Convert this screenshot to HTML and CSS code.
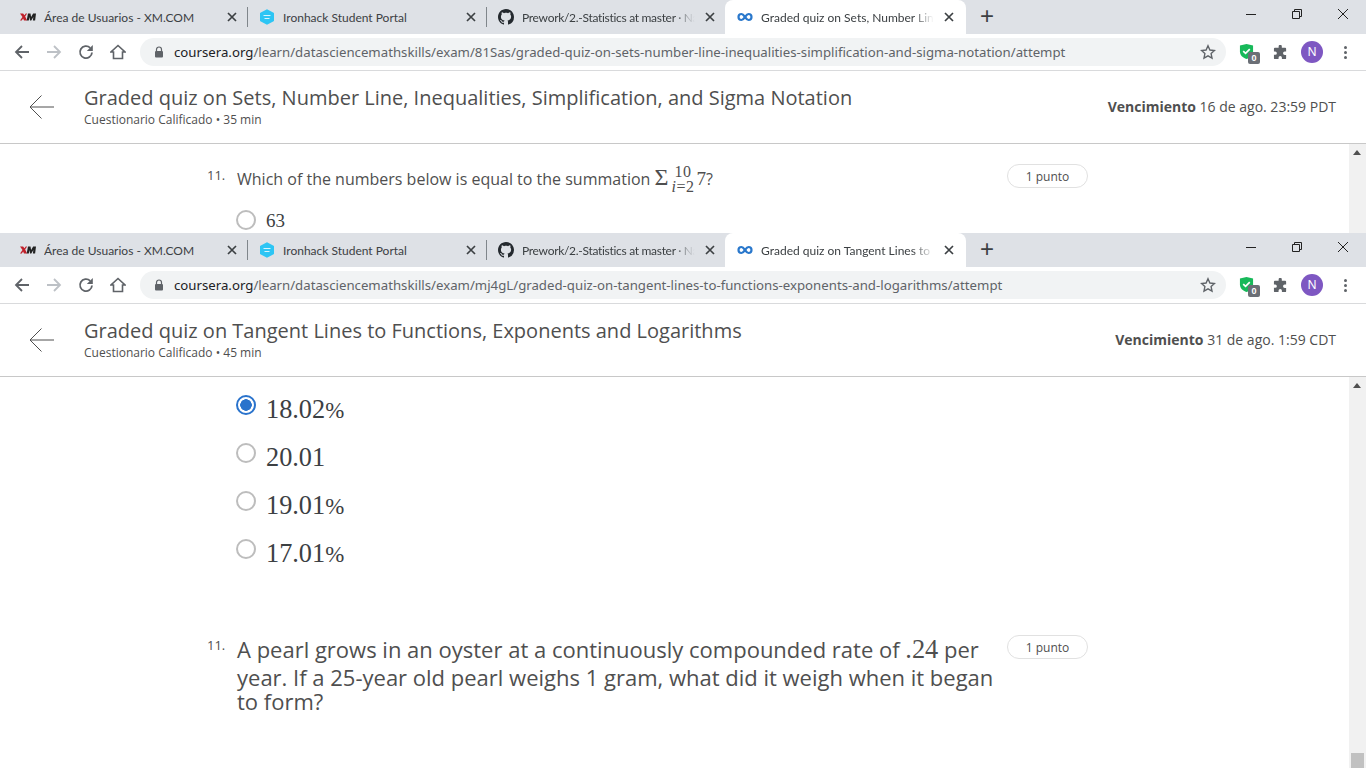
FILE: index.html
```html
<!DOCTYPE html>
<html lang="en">
<head>
    <meta charset="UTF-8">
    <title>Graded quiz</title>
    <link rel="stylesheet" href="styles.css">
</head>
<body>
<svg class="defs" width="0" height="0">
    <symbol id="i-xm" viewBox="0 0 18 10"><path d="M0 1h3.500l1.500 2 1.500-2h1.500L5.800 4.500 8 9H4.500L3.500 6.800 2 9H0l2.800-4z" fill="#c0202a"/><path d="M7.500 9l1.500-8h2.800l.7 4 2.300-4H18l-1 8h-2.500l.5-4-2.300 4h-1.400l-.7-4-.7 4z" fill="#222"/></symbol>
    <symbol id="i-iron" viewBox="0 0 16 16"><path d="M8 .3l6.600 3.500a.8.8 0 01.4.7v7a.8.8 0 01-.4.7L8 15.700 1.400 12.200a.8.8 0 01-.4-.7v-7a.8.8 0 01.4-.7z" fill="#2dc5f4"/><path d="M4.500 6.500h7M5.500 9.500h5" stroke="#d8f4fd" stroke-width="1.100"/></symbol>
    <symbol id="i-gh" viewBox="0 0 16 16"><path fill="#24292e" d="M8 0C3.580 0 0 3.580 0 8c0 3.540 2.290 6.530 5.470 7.590.4.070.55-.17.55-.38 0-.19-.01-.82-.01-1.490-2.010.37-2.530-.49-2.690-.94-.09-.23-.48-.94-.82-1.130-.28-.15-.68-.52-.01-.53.630-.01 1.080.58 1.230.82.720 1.210 1.870.87 2.330.66.070-.52.280-.87.510-1.070-1.780-.2-3.640-.89-3.640-3.950 0-.87.310-1.590.820-2.150-.08-.2-.36-1.020.08-2.120 0 0 .67-.21 2.200.82.640-.18 1.320-.27 2-.27s1.360.09 2 .27c1.530-1.040 2.200-.82 2.200-.82.440 1.100.160 1.920.08 2.120.51.560.82 1.270.82 2.150 0 3.070-1.870 3.750-3.650 3.950.290.250.540.730.540 1.480 0 1.070-.01 1.930-.01 2.200 0 .210.150.460.550.380A8.010 8.010 0 0016 8c0-4.420-3.580-8-8-8z"/></symbol>
    <symbol id="i-cs" viewBox="0 0 16 16"><path d="M4.500 5a3 3 0 100 6c2.800 0 4.200-6 7-6a3 3 0 110 6C8.700 11 7.300 5 4.500 5z" fill="none" stroke="#2a78cc" stroke-width="2.200"/></symbol>
    <symbol id="i-close" viewBox="0 0 10 10"><path d="M1 1l8 8M9 1l-8 8" stroke="#3c4043" stroke-width="1.700"/></symbol>
    <symbol id="i-back" viewBox="0 0 16 16"><path d="M15 8H2M8 2L2 8l6 6" fill="none" stroke="currentColor" stroke-width="1.800"/></symbol>
    <symbol id="i-reload" viewBox="0 0 16 16"><path d="M14 8.500a6 6 0 11-1.800-4.700" fill="none" stroke="#5f6368" stroke-width="1.800"/><path d="M14.800 1v6h-6z" fill="#5f6368"/></symbol>
    <symbol id="i-home" viewBox="0 0 16 16"><path d="M8 1.500L1 8h2.500v6.500h9V8H15z" fill="none" stroke="#5f6368" stroke-width="1.600"/></symbol>
    <symbol id="i-lock" viewBox="0 0 10 12"><path d="M2.500 5V3.500a2.500 2.500 0 015 0V5" fill="none" stroke="#5f6368" stroke-width="1.200"/><rect x="1" y="5" width="8" height="6.500" rx="1" fill="#5f6368"/></symbol>
    <symbol id="i-star" viewBox="0 0 16 16"><path d="M8 1.800l1.900 4.200 4.600.5-3.400 3.100.9 4.500L8 11.800l-4 2.300.9-4.500L1.500 6.500l4.600-.5z" fill="none" stroke="#5f6368" stroke-width="1.400"/></symbol>
    <symbol id="i-shield" viewBox="0 0 16 18"><path d="M1 2.500L8 1l7 1.500V9c0 4-3 6.500-7 8-4-1.500-7-4-7-8z" fill="#17b95a"/><path d="M4.500 8.500l2.500 2.500 4.500-4.500" fill="none" stroke="#fff" stroke-width="1.800"/></symbol>
    <symbol id="i-puzzle" viewBox="0 0 16 16"><path d="M6 1.500a1.700 1.700 0 013.400 0V3H13a1 1 0 011 1v3h-1.500a1.800 1.800 0 000 3.600H14V14a1 1 0 01-1 1H9.500v-1.500a1.800 1.800 0 00-3.600 0V15H2a1 1 0 01-1-1v-3.500h1.300a1.800 1.800 0 000-3.600H1V4a1 1 0 011-1h4z" fill="#5f6368"/></symbol>
    <symbol id="i-arrow" viewBox="0 0 26 26"><path d="M25 13H1.500M12.500 1.500L1 13l11.500 11.500" fill="none" stroke="#4f4f4f" stroke-width="1"/></symbol>
</svg>

<section class="win win-top">
    <div class="tabbar">
        <div class="tab"><svg class="fav"><use href="#i-xm"/></svg><span class="tab-name">Área de Usuarios - XM.COM</span><svg class="tab-x"><use href="#i-close"/></svg></div>
        <div class="tab"><svg class="fav"><use href="#i-iron"/></svg><span class="tab-name">Ironhack Student Portal</span><svg class="tab-x"><use href="#i-close"/></svg></div>
        <div class="tab"><svg class="fav"><use href="#i-gh"/></svg><span class="tab-name fade tight">Prework/2.-Statistics at master · Nat</span><svg class="tab-x"><use href="#i-close"/></svg></div>
        <div class="tab active"><svg class="fav"><use href="#i-cs"/></svg><span class="tab-name fade">Graded quiz on Sets, Number Line, Inequalities</span><svg class="tab-x"><use href="#i-close"/></svg></div>
        <div class="newtab">+</div>
        <div class="winbtns">
            <svg viewBox="0 0 12 12"><path d="M1 6.500h10" stroke="#222" fill="none"/></svg>
            <svg viewBox="0 0 12 12"><path d="M1.500 3.500h7v7h-7zM3.500 3.500v-2h7v7h-2" stroke="#222" fill="none"/></svg>
            <svg viewBox="0 0 12 12"><path d="M1 1l10 10M11 1L1 11" stroke="#222" fill="none"/></svg>
        </div>
    </div>
    <div class="toolbar">
        <svg class="nav"><use href="#i-back"/></svg>
        <svg class="nav off"><use href="#i-back"/></svg>
        <svg class="nav"><use href="#i-reload"/></svg>
        <svg class="nav"><use href="#i-home"/></svg>
        <div class="omnibox">
            <svg class="lock"><use href="#i-lock"/></svg>
            <span class="url"><b>coursera.org</b>/learn/datasciencemathskills/exam/81Sas/graded-quiz-on-sets-number-line-inequalities-simplification-and-sigma-notation/attempt</span>
            <svg class="star"><use href="#i-star"/></svg>
        </div>
        <div class="ext"><svg class="shield"><use href="#i-shield"/></svg><span class="ext-badge">0</span></div>
        <svg class="puzzle"><use href="#i-puzzle"/></svg>
        <div class="avatar">N</div>
        <div class="dots"><i></i><i></i><i></i></div>
    </div>
    <header class="quiz-head">
        <svg class="quiz-back"><use href="#i-arrow"/></svg>
        <div class="quiz-title">
            <h1>Graded quiz on Sets, Number Line, Inequalities, Simplification, and Sigma Notation</h1>
            <p>Cuestionario Calificado • 35 min</p>
        </div>
        <div class="due"><b>Vencimiento</b> 16 de ago. 23:59 PDT</div>
    </header>
    <div class="body">
        <div class="content">
            <div class="question small">
                <span class="qnum">11.</span>
                <div class="qtext">Which of the numbers below is equal to the summation <span class="math"><span class="sigma">Σ</span><span class="limits"><sup>10</sup><sub><i>i</i>=2</sub></span>7</span>?</div>
                <span class="points">1 punto</span>
            </div>
            <div class="opt first"><span class="radio"></span><span class="math">63</span></div>
        </div>
        <div class="scrollbar"><span class="up"></span></div>
    </div>
</section>

<section class="win">
    <div class="tabbar">
        <div class="tab"><svg class="fav"><use href="#i-xm"/></svg><span class="tab-name">Área de Usuarios - XM.COM</span><svg class="tab-x"><use href="#i-close"/></svg></div>
        <div class="tab"><svg class="fav"><use href="#i-iron"/></svg><span class="tab-name">Ironhack Student Portal</span><svg class="tab-x"><use href="#i-close"/></svg></div>
        <div class="tab"><svg class="fav"><use href="#i-gh"/></svg><span class="tab-name fade tight">Prework/2.-Statistics at master · Nat</span><svg class="tab-x"><use href="#i-close"/></svg></div>
        <div class="tab active"><svg class="fav"><use href="#i-cs"/></svg><span class="tab-name fade">Graded quiz on Tangent Lines to Functions</span><svg class="tab-x"><use href="#i-close"/></svg></div>
        <div class="newtab">+</div>
        <div class="winbtns">
            <svg viewBox="0 0 12 12"><path d="M1 6.500h10" stroke="#222" fill="none"/></svg>
            <svg viewBox="0 0 12 12"><path d="M1.500 3.500h7v7h-7zM3.500 3.500v-2h7v7h-2" stroke="#222" fill="none"/></svg>
            <svg viewBox="0 0 12 12"><path d="M1 1l10 10M11 1L1 11" stroke="#222" fill="none"/></svg>
        </div>
    </div>
    <div class="toolbar">
        <svg class="nav"><use href="#i-back"/></svg>
        <svg class="nav off"><use href="#i-back"/></svg>
        <svg class="nav"><use href="#i-reload"/></svg>
        <svg class="nav"><use href="#i-home"/></svg>
        <div class="omnibox">
            <svg class="lock"><use href="#i-lock"/></svg>
            <span class="url"><b>coursera.org</b>/learn/datasciencemathskills/exam/mj4gL/graded-quiz-on-tangent-lines-to-functions-exponents-and-logarithms/attempt</span>
            <svg class="star"><use href="#i-star"/></svg>
        </div>
        <div class="ext"><svg class="shield"><use href="#i-shield"/></svg><span class="ext-badge">0</span></div>
        <svg class="puzzle"><use href="#i-puzzle"/></svg>
        <div class="avatar">N</div>
        <div class="dots"><i></i><i></i><i></i></div>
    </div>
    <header class="quiz-head">
        <svg class="quiz-back"><use href="#i-arrow"/></svg>
        <div class="quiz-title">
            <h1>Graded quiz on Tangent Lines to Functions, Exponents and Logarithms</h1>
            <p>Cuestionario Calificado • 45 min</p>
        </div>
        <div class="due"><b>Vencimiento</b> 31 de ago. 1:59 CDT</div>
    </header>
    <div class="body">
        <div class="content">
            <div class="opt big"><span class="radio on"></span><span class="math">18.02<small>%</small></span></div>
            <div class="opt big"><span class="radio"></span><span class="math">20.01</span></div>
            <div class="opt big"><span class="radio"></span><span class="math">19.01<small>%</small></span></div>
            <div class="opt big"><span class="radio"></span><span class="math">17.01<small>%</small></span></div>
            <div class="question large">
                <span class="qnum">11.</span>
                <div class="qtext">A pearl grows in an oyster at a continuously compounded rate of <span class="math">.24</span> per year. If a 25-year old pearl weighs 1 gram, what did it weigh when it began to form?</div>
                <span class="points">1 punto</span>
            </div>
        </div>
        <div class="scrollbar"><span class="up"></span><span class="thumb"></span></div>
    </div>
</section>
</body>
</html>
```

FILE: styles.css
```css
html, body {
    margin: 0;
    height: 768px;
    overflow: hidden;
    background: #fff;
    font-family: "Open Sans", sans-serif;
}

.defs {
    display: block;
    height: 0;
}

.win {
    display: flex;
    flex-direction: column;
    height: 535px;
}

.win-top {
    height: 233px;
}

/* tab strip */
.tabbar {
    display: flex;
    height: 34px;
    flex: none;
    background: #dee1e6;
    padding-left: 8px;
}

.tab {
    display: flex;
    align-items: center;
    width: 239px;
    height: 34px;
    padding: 0 10px 0 12px;
    box-sizing: border-box;
    position: relative;
    font-family: Lato, sans-serif;
    font-size: 12px;
    color: #3c4043;
}

.tab + .tab::before {
    content: "";
    position: absolute;
    left: 0;
    top: 7px;
    height: 20px;
    width: 1px;
    background: #80868b;
}

.tab.active {
    width: 241px;
    background: #fff;
    border-radius: 8px 8px 0 0;
    padding-right: 12px;
}

.tab.active::before {
    display: none;
}

.fav {
    width: 16px;
    height: 16px;
    flex: none;
    margin-right: 8px;
}

.tab-name {
    flex: 1;
    overflow: hidden;
    white-space: nowrap;
    margin-right: 12px;
}

.tab-name.fade {
    margin-right: 5px;
    -webkit-mask-image: linear-gradient(to right, #000 85%, transparent 97%);
    mask-image: linear-gradient(to right, #000 85%, transparent 97%);
}

.tab-name.tight {
    letter-spacing: -0.300px;
}

.tab-x {
    width: 10px;
    height: 10px;
    flex: none;
}

.newtab {
    width: 42px;
    text-align: center;
    font-family: "Liberation Sans", sans-serif;
    font-size: 24px;
    line-height: 32px;
    color: #3c4043;
}

.winbtns {
    margin-left: auto;
    display: flex;
    gap: 34px;
    padding: 8px 17px 0 0;
}

.winbtns svg {
    width: 12px;
    height: 12px;
}

/* toolbar */
.toolbar {
    display: flex;
    align-items: center;
    height: 36px;
    flex: none;
    border-bottom: 1px solid #d9dadc;
    background: #fff;
    padding-left: 14px;
}

.nav {
    width: 16px;
    height: 16px;
    margin-right: 16px;
    color: #5f6368;
    flex: none;
}

.nav.off {
    color: #bdc1c6;
    transform: scaleX(-1);
}

.omnibox {
    display: flex;
    align-items: center;
    width: 1086px;
    height: 28px;
    margin-left: -2px;
    border-radius: 14px;
    background: #f1f3f4;
    box-sizing: border-box;
    padding: 0 10px 0 14px;
    font-family: "Noto Sans", sans-serif;
    font-size: 13.220px;
}

.lock {
    width: 10px;
    height: 12px;
    margin-right: 10px;
    flex: none;
}

.url {
    flex: 1;
    color: #5f6368;
    white-space: nowrap;
    overflow: hidden;
}

.url b {
    font-weight: 400;
    color: #202124;
}

.star {
    width: 16px;
    height: 16px;
    flex: none;
}

.ext {
    position: relative;
    width: 16px;
    height: 18px;
    margin-left: 13px;
    flex: none;
}

.shield {
    width: 15px;
    height: 17px;
    display: block;
}

.ext-badge {
    position: absolute;
    left: 9px;
    top: 9px;
    width: 12px;
    height: 12px;
    border-radius: 2px;
    background: #6b6f76;
    color: #fff;
    font: 700 9px/12px "Liberation Sans", sans-serif;
    text-align: center;
}

.puzzle {
    width: 15px;
    height: 15px;
    margin-left: 18px;
    flex: none;
}

.avatar {
    width: 22px;
    height: 22px;
    margin-left: 13px;
    border-radius: 50%;
    background: #7e57c2;
    color: #fff;
    font: 400 12px/22px "Noto Sans", sans-serif;
    text-align: center;
    flex: none;
}

.dots {
    display: flex;
    flex-direction: column;
    gap: 2px;
    margin-left: 21px;
}

.dots i {
    width: 3px;
    height: 3px;
    border-radius: 50%;
    background: #5f6368;
}

/* quiz header */
.quiz-head {
    display: flex;
    align-items: flex-start;
    height: 73px;
    flex: none;
    box-sizing: border-box;
    border-bottom: 1px solid #c8c8c8;
    color: #4f4f4f;
    padding: 0 30px 0 29px;
}

.quiz-back {
    width: 26px;
    height: 26px;
    margin: 23px 29px 0 0;
    flex: none;
}

.quiz-title {
    flex: 1;
    padding-top: 13px;
}

.quiz-title h1 {
    margin: 0;
    font-size: 20px;
    font-weight: 400;
    line-height: 28px;
}

.quiz-title p {
    margin: 1px 0 0;
    font-size: 12px;
    line-height: 14px;
}

.due {
    padding-top: 26px;
    font-size: 14px;
    line-height: 20px;
}

.due b {
    font-weight: 700;
}

/* page body */
.body {
    flex: 1;
    display: flex;
    overflow: hidden;
}

.content {
    flex: 1;
    padding-left: 207px;
    overflow: hidden;
}

.scrollbar {
    position: relative;
    width: 17px;
    background: #f1f1f1;
}

.up {
    position: absolute;
    left: 4px;
    top: 6px;
    border: 4px solid transparent;
    border-top: 0;
    border-bottom: 5px solid #505050;
}

.thumb {
    position: absolute;
    left: 2px;
    bottom: 0;
    width: 13px;
    height: 15px;
    background: #c1c1c1;
}

/* questions */
.question {
    display: flex;
    align-items: flex-start;
    color: #4f4f4f;
}

.qnum {
    width: 30px;
    flex: none;
    font-size: 13px;
    line-height: 16px;
    padding-top: 2px;
}

.qtext {
    width: 770px;
    height: 30px;
    flex: none;
}

.points {
    flex: none;
    width: 81px;
    height: 24px;
    box-sizing: border-box;
    border: 1px solid #e1e1e1;
    border-radius: 12px;
    font-size: 12px;
    line-height: 23px;
    text-align: center;
}

.question.small {
    padding-top: 20px;
}

.question.small .qnum {
    padding-top: 3px;
}

.question.small .qtext {
    font-size: 16px;
    line-height: 30px;
    margin-top: -2px;
}

.question.large {
    margin-top: 66px;
}

.question.large .qtext {
    box-sizing: border-box;
    height: auto;
    font-size: 22px;
    line-height: 24px;
    padding: 2px 13px 0 0;
}

.question.large .math {
    display: inline-block;
    padding-bottom: 4px;
}

.math {
    font-family: "Liberation Serif", serif;
    font-size: 1.200em;
}

.math small {
    font-size: 0.870em;
}

.sigma {
    font-size: 1.250em;
}

.limits {
    display: inline-flex;
    flex-direction: column;
    vertical-align: middle;
    font-size: 16px;
    line-height: 15px;
    letter-spacing: 0.500px;
    margin: -4px 2px 0 3px;
    align-items: center;
}

.limits sup, .limits sub {
    font-size: inherit;
    line-height: 15px;
    vertical-align: baseline;
}

/* answer options */
.opt {
    display: flex;
    align-items: flex-start;
    color: #3c4043;
    padding-left: 29px;
}

.opt.first {
    margin-top: 18px;
}

.opt.first .math {
    font-size: 19px;
    line-height: 20px;
    margin: 1px 0 0 10px;
}

.opt.big {
    height: 48px;
}

.opt.big .math {
    font-size: 26.300px;
    line-height: 32px;
    margin: 17px 0 0 10px;
}

.radio {
    width: 20px;
    height: 20px;
    flex: none;
    box-sizing: border-box;
    border: 2px solid #bdbdbd;
    border-radius: 50%;
}

.opt.big .radio {
    margin-top: 18px;
}

.radio.on {
    border-color: #2a73cc;
    background: radial-gradient(circle, #2a73cc 0, #2a73cc 5.500px, #fff 6px);
}
```
